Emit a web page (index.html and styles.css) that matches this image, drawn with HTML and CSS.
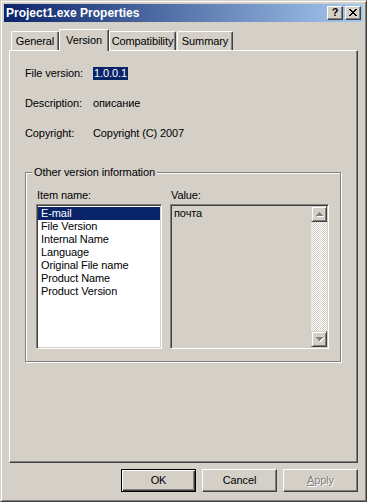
FILE: index.html
```html
<!DOCTYPE html>
<html>
<head>
<meta charset="utf-8">
<title>Project1.exe Properties</title>
<link rel="stylesheet" href="styles.css">
</head>
<body>
<div class="window">
  <div class="titlebar">
    <span class="title">Project1.exe Properties</span>
    <div class="caption-buttons">
      <div class="cap-btn help">?</div>
      <div class="cap-btn close">
        <svg width="8" height="7" viewBox="0 0 8 7" shape-rendering="crispEdges">
          <path d="M0 0h2v1h-2z M6 0h2v1h-2z M1 1h2v1h-2z M5 1h2v1h-2z M2 2h4v1h-4z M3 3h2v1h-2z M2 4h4v1h-4z M1 5h2v1h-2z M5 5h2v1h-2z M0 6h2v1h-2z M6 6h2v1h-2z" fill="#000"/>
        </svg>
      </div>
    </div>
  </div>

  <div class="tabs">
    <div class="tab t-general">General</div>
    <div class="tab active t-version">Version</div>
    <div class="tab t-compat">Compatibility</div>
    <div class="tab t-summary">Summary</div>
  </div>

  <div class="panel">
    <div class="info">
      <span class="lbl">File version:</span><span class="val"><span class="sel">1.0.0.1</span></span>
      <span class="lbl">Description:</span><span class="val">описание</span>
      <span class="lbl">Copyright:</span><span class="val">Copyright (C) 2007</span>
    </div>

    <div class="group">
      <div class="legend">Other version information</div>
      <div class="group-body">
        <div class="col col-items">
          <div class="col-label">Item name:</div>
          <ul class="listbox">
            <li class="selected">E-mail</li>
            <li>File Version</li>
            <li>Internal Name</li>
            <li>Language</li>
            <li>Original File name</li>
            <li>Product Name</li>
            <li>Product Version</li>
          </ul>
        </div>
        <div class="col col-value">
          <div class="col-label">Value:</div>
          <div class="valuebox">
            <div class="value-text">почта</div>
            <div class="scrollbar">
              <div class="sb-btn">
                <svg width="9" height="6" viewBox="0 0 9 6" shape-rendering="crispEdges">
                  <path d="M4 1h1v1h-1z M3 2h3v1h-3z M2 3h5v1h-5z M1 4h7v1h-7z" fill="#fff" transform="translate(1,1)"/>
                  <path d="M4 1h1v1h-1z M3 2h3v1h-3z M2 3h5v1h-5z M1 4h7v1h-7z" fill="#808080"/>
                </svg>
              </div>
              <div class="sb-track"></div>
              <div class="sb-btn">
                <svg width="9" height="6" viewBox="0 0 9 6" shape-rendering="crispEdges">
                  <path d="M1 1h7v1h-7z M2 2h5v1h-5z M3 3h3v1h-3z M4 4h1v1h-1z" fill="#fff" transform="translate(1,1)"/>
                  <path d="M1 1h7v1h-7z M2 2h5v1h-5z M3 3h3v1h-3z M4 4h1v1h-1z" fill="#808080"/>
                </svg>
              </div>
            </div>
          </div>
        </div>
      </div>
    </div>
  </div>

  <div class="buttons">
    <div class="btn default"><span>OK</span></div>
    <div class="btn"><span>Cancel</span></div>
    <div class="btn disabled"><span><u>A</u>pply</span></div>
  </div>
</div>
</body>
</html>
```

FILE: styles.css
```css
* {
  box-sizing: border-box;
  margin: 0;
  padding: 0;
}

html, body {
  width: 367px;
  height: 502px;
  overflow: hidden;
  background: #d4d0c8;
}

body {
  font-family: "Liberation Sans", Arial, sans-serif;
  font-size: 11px;
  line-height: 13px;
  letter-spacing: -0.1px;
  color: #000;
}

.window {
  width: 367px;
  height: 502px;
  border: 1px solid;
  border-color: #d4d0c8 #404040 #404040 #d4d0c8;
  box-shadow: inset 1px 1px #fff, inset -1px -1px #808080;
  padding: 3px;
  display: flex;
  flex-direction: column;
}

/* Title bar */
.titlebar {
  height: 18px;
  flex: none;
  background: linear-gradient(to right, #0a246a, #a6caf0);
  display: flex;
  align-items: center;
  justify-content: space-between;
  padding: 0 2px 0 2px;
}

.title {
  color: #fff;
  font-weight: bold;
  font-size: 12px;
  line-height: 14px;
  letter-spacing: 0;
  white-space: nowrap;
}

.caption-buttons {
  display: flex;
  gap: 2px;
  margin-top: -1px;
}

.cap-btn {
  width: 16px;
  height: 14px;
  background: #d4d0c8;
  border: 1px solid;
  border-color: #fff #404040 #404040 #fff;
  box-shadow: inset -1px -1px #808080;
  display: flex;
  align-items: center;
  justify-content: center;
}

.cap-btn.help {
  font-weight: bold;
  font-size: 11px;
  line-height: 11px;
  padding-bottom: 1px;
}

.cap-btn.close svg {
  display: block;
}

/* Tabs */
.tabs {
  display: flex;
  align-items: flex-end;
  height: 22px;
  margin-top: 7px;
  margin-bottom: -1px;
  padding-left: 7px;
  position: relative;
  z-index: 1;
  flex: none;
}

.tab {
  height: 19px;
  margin-bottom: 1px;
  background: #d4d0c8;
  border-top: 1px solid #fff;
  border-left: 1px solid #fff;
  border-right: 1px solid #404040;
  border-radius: 2px 2px 0 0;
  box-shadow: inset -1px 0 #808080;
  padding-top: 3px;
  text-align: center;
  white-space: nowrap;
}

.tab.active {
  height: 22px;
  margin-bottom: 0;
  padding-top: 4px;
}

.t-general { width: 48px; }
.t-version { width: 50px; }
.t-compat { width: 67px; }
.t-summary { width: 56px; margin-left: 1px; }

/* Panel */
.panel {
  width: 349px;
  height: 413px;
  margin-left: 5px;
  flex: none;
  border: 1px solid;
  border-color: #fff #404040 #404040 #fff;
  box-shadow: inset -1px -1px #808080;
  padding: 16px 0 0 15px;
  display: flex;
  flex-direction: column;
}

.info {
  display: grid;
  grid-template-columns: 68px auto;
  row-gap: 17px;
  align-items: start;
}

.lbl, .val {
  white-space: nowrap;
  height: 13px;
}

.sel {
  background: #0a246a;
  color: #fff;
  padding: 0 1px;
  display: inline-block;
  height: 13px;
}

/* Group box */
.group {
  width: 316px;
  height: 190px;
  margin-top: 32px;
  border: 1px solid #808080;
  box-shadow: inset 1px 1px #fff, 1px 1px #fff;
}

.legend {
  width: fit-content;
  margin: -7px 0 0 6px;
  padding: 0 2px;
  background: #d4d0c8;
  white-space: nowrap;
}

.group-body {
  display: flex;
  gap: 8px;
  padding: 10px 0 0 10px;
}

.col-label {
  height: 13px;
  margin-bottom: 2px;
  padding-left: 1px;
}

.col-items { width: 126px; }
.col-value { width: 159px; }

.listbox {
  list-style: none;
  height: 145px;
  background: #fff;
  border: 1px solid;
  border-color: #808080 #fff #fff #808080;
  box-shadow: inset 1px 1px #404040, inset -1px -1px #d4d0c8;
  padding: 2px 1px 1px 1px;
}

.listbox li {
  height: 13px;
  padding-left: 3px;
  white-space: nowrap;
}

.listbox li.selected {
  background: #0a246a;
  color: #fff;
}

.valuebox {
  height: 145px;
  background: #d4d0c8;
  border: 1px solid;
  border-color: #808080 #fff #fff #808080;
  box-shadow: inset 1px 1px #404040, inset -1px -1px #d4d0c8;
  padding: 1px;
  display: flex;
}

.value-text {
  flex: 1;
  padding: 1px 0 0 2px;
}

.scrollbar {
  width: 16px;
  display: flex;
  flex-direction: column;
}

.sb-btn {
  width: 16px;
  height: 16px;
  flex: none;
  background: #d4d0c8;
  border: 1px solid;
  border-color: #d4d0c8 #404040 #404040 #d4d0c8;
  box-shadow: inset 1px 1px #fff, inset -1px -1px #808080;
  display: flex;
  align-items: center;
  justify-content: center;
}

.sb-btn svg {
  display: block;
}

.sb-track {
  flex: 1;
  background-color: #fff;
  background-image: repeating-conic-gradient(#d4d0c8 0 25%, #fff 0 50%);
  background-size: 2px 2px;
}

/* Buttons */
.buttons {
  display: flex;
  justify-content: flex-end;
  gap: 6px;
  margin-top: 6px;
  padding-right: 5px;
  flex: none;
}

.btn {
  width: 75px;
  height: 23px;
  border: 1px solid;
  border-color: #fff #404040 #404040 #fff;
  box-shadow: inset -1px -1px #808080;
  display: flex;
  align-items: center;
  justify-content: center;
}

.btn.default {
  border-color: #000;
  box-shadow: inset 1px 1px #fff, inset -1px -1px #404040, inset -2px -2px #808080;
}

.btn.disabled {
  color: #808080;
  text-shadow: 1px 1px #fff;
}

.btn u {
  text-decoration: underline;
}
```
